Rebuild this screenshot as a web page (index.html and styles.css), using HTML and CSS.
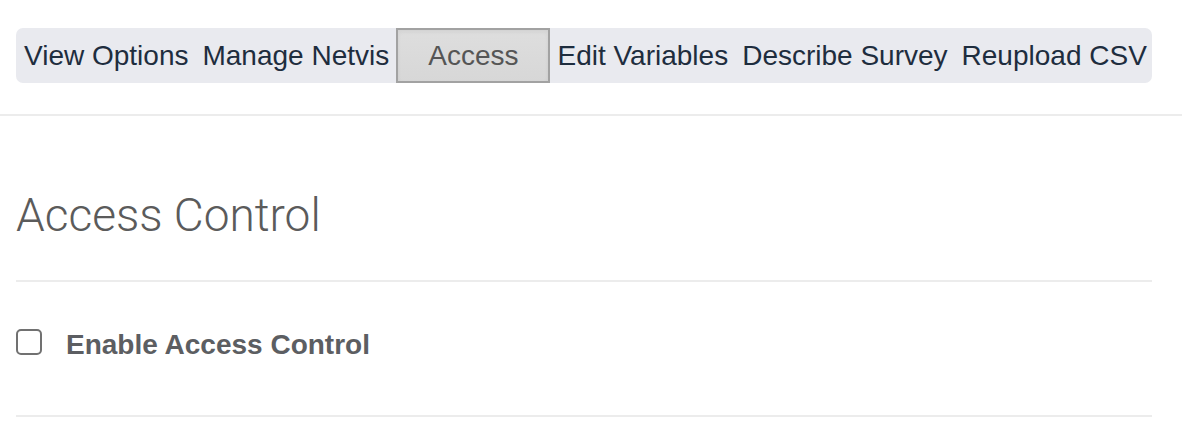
FILE: index.html
```html
<!DOCTYPE html>
<html lang="en">
<head>
<meta charset="utf-8">
<title>Access Control</title>
<link rel="stylesheet" href="styles.css">
</head>
<body>
<header class="topbar">
  <nav class="tabs">
    <a class="tab" href="#">View Options</a>
    <a class="tab" href="#">Manage Netvis</a>
    <a class="tab tab-active" href="#">Access</a>
    <a class="tab" href="#">Edit Variables</a>
    <a class="tab" href="#">Describe Survey</a>
    <a class="tab" href="#">Reupload CSV</a>
  </nav>
</header>
<main class="content">
  <h2 class="title">Access Control</h2>
  <div class="row">
    <label class="check">
      <input type="checkbox" class="box">
      <span class="check-label">Enable Access Control</span>
    </label>
  </div>
</main>
</body>
</html>
```

FILE: styles.css
```css
html, body {
  margin: 0;
  padding: 0;
  background: #ffffff;
}

body {
  font-family: "Liberation Sans", Arial, Helvetica, sans-serif;
}

.topbar {
  padding: 28px 16px 31px;
  border-bottom: 2px solid #ececec;
}

.tabs {
  display: flex;
  align-items: stretch;
  width: 1136px;
  box-sizing: border-box;
  height: 55px;
  padding: 0 1px;
  background: #e9eaef;
  border-radius: 7px;
}

.tab {
  display: block;
  padding: 0 7px;
  line-height: 56px;
  font-size: 28px;
  color: #1e2d3e;
  text-decoration: none;
  white-space: nowrap;
}

.tab-active {
  padding: 0 30px;
  line-height: 52px;
  color: #555555;
  border: 2px solid #a2a2a2;
  background: linear-gradient(#dedede, #d7d7d7);
  box-shadow: inset 0 2px 4px rgba(0, 0, 0, 0.06);
}

.content {
  width: 1136px;
  margin-left: 16px;
}

.title {
  margin: 0;
  padding: 74px 0 39px;
  font-family: Roboto, "Liberation Sans", sans-serif;
  font-weight: 300;
  font-size: 46px;
  line-height: 51px;
  color: #5b5b5b;
  border-bottom: 2px solid #ececec;
}

.row {
  padding: 43px 0 50px;
  border-bottom: 2px solid #ececec;
}

.check {
  display: flex;
  align-items: flex-start;
  gap: 24px;
}

.box {
  appearance: none;
  -webkit-appearance: none;
  margin: 4px 0 0;
  width: 26px;
  height: 26px;
  box-sizing: border-box;
  border: 2px solid #717171;
  border-radius: 5px;
  background: #ffffff;
}

.check-label {
  font-size: 28px;
  font-weight: 700;
  line-height: 40px;
  color: #5c5e62;
}
```
